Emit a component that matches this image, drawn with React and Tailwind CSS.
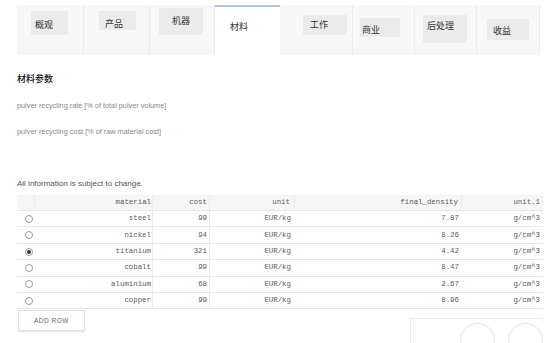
import React from 'react';

const tabs = [
  { label: '概观', w: 'w-[67px]', box: 'ml-[14px] mt-[6px] w-[37px] h-[24px] pl-[4px] pt-[10px]' },
  { label: '产品', w: 'w-[66px]', box: 'ml-[15px] mt-[6px] w-[37px] h-[19px] pl-[6px] pt-[9px]' },
  { label: '机器', w: 'w-[65px]', box: 'ml-[9px] mt-[3px] w-[44px] h-[27px] pl-[13px] pt-[9px]' },
  { label: '材料', w: 'w-[65px]', active: true },
  { label: '工作', w: 'w-[73px]', box: 'ml-[23px] mt-[10px] w-[44px] h-[20px] pl-[7px] pt-[6px]' },
  { label: '商业', w: 'w-[62px]', box: 'ml-[7px] mt-[13px] w-[40px] h-[19px] pl-[2px] pt-[8px]' },
  { label: '后处理', w: 'w-[62px]', box: 'ml-[8px] mt-[10px] w-[44px] h-[28px] pl-[4px] pt-[7px]' },
  { label: '收益', w: 'w-[63px]', box: 'ml-[10px] mt-[14px] w-[42px] h-[21px] pl-[6px] pt-[8px]' },
];

const rows = [
  { material: 'steel', cost: 99, unit: 'EUR/kg', density: '7.87', unit1: 'g/cm^3' },
  { material: 'nickel', cost: 94, unit: 'EUR/kg', density: '8.26', unit1: 'g/cm^3' },
  { material: 'titanium', cost: 321, unit: 'EUR/kg', density: '4.42', unit1: 'g/cm^3', checked: true },
  { material: 'cobalt', cost: 99, unit: 'EUR/kg', density: '8.47', unit1: 'g/cm^3' },
  { material: 'aluminium', cost: 68, unit: 'EUR/kg', density: '2.67', unit1: 'g/cm^3' },
  { material: 'copper', cost: 99, unit: 'EUR/kg', density: '8.96', unit1: 'g/cm^3' },
];

const cols = 'grid grid-cols-[18px_118px_57px_85px_167px_81px]';

export default function App() {
  return (
    <div className="w-[553px] h-[343px] overflow-hidden bg-white font-['Liberation_Sans','Noto_Sans_CJK_SC',sans-serif]">
      {/* tab bar */}
      <div className="pt-[5px] pl-[17px]">
        <div className="flex h-[50px] w-[523px] bg-[#f7f7f7]">
          {tabs.map((t) =>
            t.active ? (
              <div key={t.label} className={`${t.w} h-[50px] bg-white border-t-2 border-[#b4c6dc] pl-[15px] pt-[14px] text-[9px] text-[#333]`}>
                {t.label}
              </div>
            ) : (
              <div key={t.label} className={`${t.w} h-[50px] border-r border-[#ececec]`}>
                <div className={`${t.box} bg-[#ebebeb] text-[9px] leading-none text-[#333]`}>{t.label}</div>
              </div>
            )
          )}
        </div>
      </div>

      <div className="pl-[17px] pt-[20px] text-[9px] leading-none text-[#111] font-medium">材料参数</div>
      <div className="pl-[17px] pt-[18px] text-[7.3px] leading-none text-[#8a8a8a]">
        pulver recycling rate [% of total pulver volume]
      </div>
      <div className="pl-[17px] pt-[19px] text-[7.3px] leading-none text-[#8a8a8a]">
        pulver recycling cost [% of raw material cost]
      </div>
      <div className="pl-[17px] pt-[44px] text-[8px] leading-none text-[#555]">All information is subject to change.</div>

      {/* table */}
      <div className="ml-[17px] mt-[7px] w-[526px] font-['Liberation_Mono',monospace] text-[7.4px] text-[#5a5a5a]">
        <div className={`${cols} h-[16.5px] bg-[#f6f6f6] border-b border-[#e6e6e6]`}>
          <div className="border-r border-[#ececec]" />
          <div className="flex items-center justify-end pr-[1px] border-r border-[#ececec]">material</div>
          <div className="flex items-center justify-end pr-[2px] border-r border-[#ececec]">cost</div>
          <div className="flex items-center justify-end pr-[4px] border-r border-[#ececec]">unit</div>
          <div className="flex items-center justify-end pr-[3px] border-r border-[#ececec]">final_density</div>
          <div className="flex items-center justify-end pr-[3px]">unit.1</div>
        </div>
        {rows.map((r) => (
          <div key={r.material} className={`${cols} h-[16.4px] border-b border-[#e6e6e6]`}>
            <div className="flex items-center justify-center pl-[6px]">
              <span className="w-[8px] h-[8px] rounded-full border border-[#9a9a9a] flex items-center justify-center">
                {r.checked && <span className="w-[4px] h-[4px] rounded-full bg-[#333]" />}
              </span>
            </div>
            <div className="flex items-center justify-end pr-[1px] border-r border-[#ececec]">{r.material}</div>
            <div className="flex items-center justify-end pr-[2px] border-r border-[#ececec]">{r.cost}</div>
            <div className="flex items-center justify-end pr-[4px]">{r.unit}</div>
            <div className="flex items-center justify-end pr-[3px]">{r.density}</div>
            <div className="flex items-center justify-end pr-[3px]">{r.unit1}</div>
          </div>
        ))}
      </div>

      <div className="ml-[17px] w-[526px] flex items-start justify-between pl-[1px] pt-[1px]">
        <button className="w-[67px] h-[21px] rounded-[2px] bg-white border border-[#e2e2e2] shadow-[0_1px_2px_rgba(0,0,0,0.12)] text-[6.5px] tracking-[0.5px] text-[#666] font-medium">
          ADD ROW
        </button>
        <div className="mt-[8px] w-[133px] h-[30px] border-l border-t border-[#ececec] flex items-start justify-end gap-[13px] pt-[4px]">
          <div className="w-[35px] h-[35px] rounded-full border border-[#e4e4e4]" />
          <div className="w-[35px] h-[35px] rounded-full border border-[#e4e4e4]" />
        </div>
      </div>
    </div>
  );
}
